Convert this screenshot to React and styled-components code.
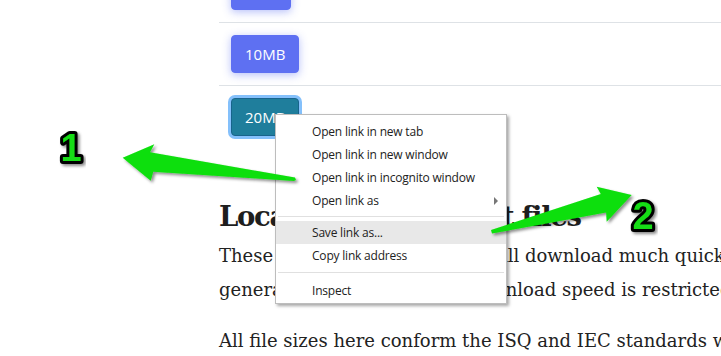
import styled, { createGlobalStyle } from "styled-components";

// 다운로드 테스트 파일 페이지 + 우클릭 메뉴 + 주석 화살표

const GlobalStyle = createGlobalStyle`
  html, body {
    margin: 0;
    background: #fff;
    overflow: hidden;
  }
`;

const Page = styled.div`
  position: relative;
  width: 721px;
  height: 356px;
  overflow: hidden;
  background: #fff;
`;

const Content = styled.main`
  padding-left: 219px;
  margin-top: -41px;
`;

const SizeTable = styled.div`
  display: flex;
  flex-direction: column;
`;

const Row = styled.div`
  border-top: 1px solid #dee2e6;
  padding: 12px;
`;

const SizeButton = styled.a`
  box-sizing: border-box;
  display: inline-flex;
  align-items: center;
  height: 38px;
  padding: 0 13px;
  border-radius: 4px;
  border: 1px solid ${(p) => (p.$focused ? "#18648c" : "#5e70f2")};
  background: ${(p) => (p.$focused ? "#1f7e9c" : "#5e70f2")};
  color: #fff;
  font: 15px "Open Sans", sans-serif;
  text-decoration: none;
  box-shadow: ${(p) =>
    p.$focused ? "0 0 0 3px #84c0fb" : "0 2px 9px rgba(94, 112, 242, 0.45)"};
`;

const Heading = styled.h2`
  margin: 51px 0 0;
  font: bold 27.5px/34px "DejaVu Serif", Georgia, serif;
  letter-spacing: -1.3px;
  color: #1e1e1e;
  white-space: nowrap;
`;

// 메뉴 뒤에 가려지는 부분 (너비만 맞춤)
const Spread = styled.span`
  word-spacing: 29px;
`;

const Paragraph = styled.p`
  margin: ${(p) => (p.$first ? "6px" : "17px")} 0 0;
  font: 18px/34px "DejaVu Serif", Georgia, serif;
  color: #222;
  white-space: nowrap;
`;

const Menu = styled.ul`
  position: absolute;
  left: 275px;
  top: 114px;
  box-sizing: border-box;
  width: 232px;
  margin: 0;
  padding: 5px 0 1px;
  list-style: none;
  background: #fff;
  border: 1px solid #bdbdbd;
  box-shadow: 2px 2px 3px rgba(0, 0, 0, 0.35);
  font: 12px "Open Sans", sans-serif;
  letter-spacing: -0.2px;
  color: #222;
`;

const MenuItem = styled.li`
  display: flex;
  align-items: center;
  height: 23px;
  padding: 0 8px 0 36px;
  background: ${(p) => (p.$active ? "#e8e8e8" : "transparent")};
`;

const Label = styled.span`
  flex: 1;
`;

const SubArrow = styled.span`
  width: 0;
  height: 0;
  border-left: 4px solid #777;
  border-top: 4px solid transparent;
  border-bottom: 4px solid transparent;
`;

const Separator = styled.li`
  height: 1px;
  margin: ${(p) => p.$gap || "4px 2px"};
  background: #e0e0e0;
`;

const Annotations = styled.svg`
  position: absolute;
  left: 0;
  top: 0;
  pointer-events: none;
`;

function Arrow({ points }) {
  return <polygon points={points} fill="#0adf0a" filter="url(#shadow)" />;
}

function Mark({ x, y, children }) {
  return (
    <text
      x={x}
      y={y}
      textAnchor="middle"
      fontFamily="'Liberation Sans', Arial, sans-serif"
      fontWeight="bold"
      fontSize="38"
      fill="#12dd12"
      stroke="#000"
      strokeWidth="6"
      strokeLinejoin="round"
      paintOrder="stroke"
      filter="url(#shadow)"
    >
      {children}
    </text>
  );
}

const sizes = ["5MB", "10MB", "20MB"];

export default function App() {
  return (
    <Page>
      <GlobalStyle />
      <Content>
        <SizeTable>
          {sizes.map((s) => (
            <Row key={s}>
              <SizeButton href="#" $focused={s === "20MB"}>
                {s}
              </SizeButton>
            </Row>
          ))}
        </SizeTable>
        <Heading>
          <Spread>Locally hosted</Spread> test files
        </Heading>
        <Paragraph $first>
          These test files are local and will download much quicker
          <br />
          generally faster unless the download speed is restricted
        </Paragraph>
        <Paragraph>
          All file sizes here conform the ISQ and IEC standards which
        </Paragraph>
      </Content>

      <Menu>
        <MenuItem>
          <Label>Open link in new tab</Label>
        </MenuItem>
        <MenuItem>
          <Label>Open link in new window</Label>
        </MenuItem>
        <MenuItem>
          <Label>Open link in incognito window</Label>
        </MenuItem>
        <MenuItem>
          <Label>Open link as</Label>
          <SubArrow />
        </MenuItem>
        <Separator />
        <MenuItem $active>
          <Label>Save link as...</Label>
        </MenuItem>
        <MenuItem>
          <Label>Copy link address</Label>
        </MenuItem>
        <Separator $gap="5px 2px 6px" />
        <MenuItem>
          <Label>Inspect</Label>
        </MenuItem>
      </Menu>

      <Annotations width="721" height="356" viewBox="0 0 721 356">
        <defs>
          <filter id="shadow" x="-20%" y="-20%" width="140%" height="140%">
            <feDropShadow dx="2" dy="2" stdDeviation="1.5" floodColor="#000" floodOpacity="0.45" />
          </filter>
        </defs>
        <Arrow points="122.7,157.7 154.3,144.3 150,152.3 295,177.5 296,180 294,181 153.3,171.7 150.7,180.7" />
        <Arrow points="631.7,195 596.7,186.7 600.8,193.9 491,230 492,233.5 606.1,212.5 606.7,221.7" />
        <Mark x="71" y="161">1</Mark>
        <Mark x="643" y="229">2</Mark>
      </Annotations>
    </Page>
  );
}
